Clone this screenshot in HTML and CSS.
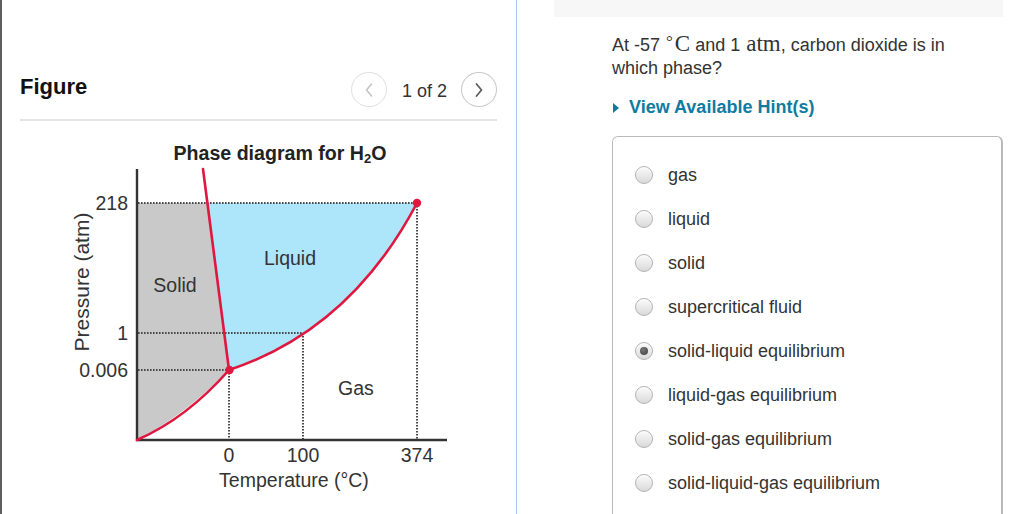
FILE: index.html
```html
<!DOCTYPE html>
<html>
<head>
<meta charset="utf-8">
<link rel="stylesheet" href="styles.css">
</head>
<body>
<div class="page">
  <section class="figure-panel">
    <header class="fig-head">
      <h2 class="fig-title">Figure</h2>
      <div class="pager">
        <button class="nav nav-prev" aria-label="Previous">
          <svg width="12" height="18" viewBox="0 0 12 18"><polyline points="8.5,3 3.5,9 8.5,15" fill="none" stroke="#c4c4c4" stroke-width="1.6" stroke-linecap="round" stroke-linejoin="round"/></svg>
        </button>
        <span class="pager-count">1 of 2</span>
        <button class="nav nav-next" aria-label="Next">
          <svg width="12" height="18" viewBox="0 0 12 18"><polyline points="3.5,3 8.5,9 3.5,15" fill="none" stroke="#5f5f5f" stroke-width="1.8" stroke-linecap="round" stroke-linejoin="round"/></svg>
        </button>
      </div>
    </header>
    <svg class="diagram" width="514" height="393" viewBox="2 121 514 393">
      <path d="M137,203 L207.4,203 L229,370 Q185,415 137,440 Z" fill="#c9c9c9"/>
      <path d="M207.4,203 L417,203 Q350,330 229,370 Z" fill="#ade6fb"/>
      <g stroke="#4a4a4a" stroke-width="2" stroke-dasharray="1.6 1.4" fill="none">
        <line x1="138" y1="203" x2="417" y2="203"/>
        <line x1="417" y1="203" x2="417" y2="440"/>
        <line x1="138" y1="333" x2="303" y2="333"/>
        <line x1="303" y1="333" x2="303" y2="440"/>
        <line x1="138" y1="370" x2="229" y2="370"/>
        <line x1="229" y1="370" x2="229" y2="440"/>
      </g>
      <path d="M137,169 L137,440 L447,440" fill="none" stroke="#333" stroke-width="2.4"/>
      <g stroke="#e0173f" stroke-width="2.6" fill="none" stroke-linecap="round">
        <path d="M137,440 Q187,418 229,370"/>
        <path d="M203,169 L229,370"/>
        <path d="M229,370 Q350,330 417,203"/>
      </g>
      <circle cx="229.5" cy="370" r="4.2" fill="#e0173f"/>
      <circle cx="417" cy="203" r="4.2" fill="#e0173f"/>
      <g class="dtext">
        <text x="280" y="160" text-anchor="middle" class="dtitle">Phase diagram for H<tspan class="sub" dy="3">2</tspan><tspan dy="-3">O</tspan></text>
        <text x="128" y="210" text-anchor="end">218</text>
        <text x="128" y="340" text-anchor="end">1</text>
        <text x="128" y="377" text-anchor="end">0.006</text>
        <text transform="translate(89,282) rotate(-90)" text-anchor="middle" class="ylabel">Pressure (atm)</text>
        <text x="175" y="292" text-anchor="middle">Solid</text>
        <text x="290" y="265" text-anchor="middle">Liquid</text>
        <text x="356" y="395" text-anchor="middle">Gas</text>
        <text x="229" y="462" text-anchor="middle">0</text>
        <text x="303" y="462" text-anchor="middle">100</text>
        <text x="417" y="462" text-anchor="middle">374</text>
        <text x="294" y="487" text-anchor="middle">Temperature (°C)</text>
      </g>
    </svg>
  </section>
  <section class="question-panel">
    <div class="topbar"></div>
    <div class="qbody">
      <p class="question">At -57 <span class="math"><span class="deg">°</span>C</span> and 1 <span class="math">atm</span>, carbon dioxide is in which phase?</p>
      <a class="hint"><span class="hint-arrow"></span>View Available Hint(s)</a>
      <div class="answers">
        <label class="option"><span class="radio"></span><span class="opt-text">gas</span></label>
        <label class="option"><span class="radio"></span><span class="opt-text">liquid</span></label>
        <label class="option"><span class="radio"></span><span class="opt-text">solid</span></label>
        <label class="option"><span class="radio"></span><span class="opt-text">supercritical fluid</span></label>
        <label class="option"><span class="radio checked"></span><span class="opt-text">solid-liquid equilibrium</span></label>
        <label class="option"><span class="radio"></span><span class="opt-text">liquid-gas equilibrium</span></label>
        <label class="option"><span class="radio"></span><span class="opt-text">solid-gas equilibrium</span></label>
        <label class="option"><span class="radio"></span><span class="opt-text">solid-liquid-gas equilibrium</span></label>
      </div>
    </div>
  </section>
</div>
</body>
</html>
```
FILE: styles.css
```css
html, body {
  margin: 0;
  padding: 0;
  background: #fff;
  font-family: "Liberation Sans", Arial, sans-serif;
  color: #333;
  overflow: hidden;
}
.page {
  display: flex;
  width: 1024px;
  height: 514px;
}
.figure-panel {
  width: 514px;
  flex: none;
  border-left: 2px solid #5e5e5e;
  border-right: 1px solid #a9c3de;
  height: 514px;
}
.fig-head {
  display: flex;
  align-items: center;
  justify-content: space-between;
  margin: 0 19px 0 18px;
  padding: 72px 0 12px;
  border-bottom: 2px solid #e4e4e4;
}
.fig-title {
  margin: 0;
  font-size: 22px;
  font-weight: bold;
  color: #111;
  line-height: 26px;
  position: relative;
  top: -3px;
}
.pager {
  display: flex;
  align-items: center;
}
.nav {
  width: 36px;
  height: 35px;
  border-radius: 50%;
  background: #fff;
  padding: 0;
  display: flex;
  align-items: center;
  justify-content: center;
  cursor: pointer;
}
.nav-prev {
  border: 1px solid #e2e2e2;
}
.nav-next {
  border: 1.5px solid #c8c8c8;
}
.pager-count {
  font-size: 18px;
  color: #333;
  margin: 0 14px 0 15px;
  position: relative;
  top: 2px;
}
.diagram {
  display: block;
}
.dtext text {
  font-family: "Liberation Sans", Arial, sans-serif;
  font-size: 19.5px;
  fill: #333;
}
.dtext .dtitle {
  font-weight: bold;
  font-size: 19.6px;
  fill: #222;
}
.dtext .sub {
  font-size: 13px;
}
.dtext .ylabel {
  font-size: 21px;
}
.question-panel {
  flex: 1;
  height: 514px;
}
.topbar {
  margin-left: 37px;
  width: 449px;
  height: 17px;
  background: #f7f7f7;
}
.qbody {
  margin-left: 95px;
  width: 391px;
}
.question {
  margin: 15px 0 0;
  font-size: 18px;
  line-height: 23px;
  color: #333;
  width: 370px;
}
.math {
  font-family: "Liberation Serif", "DejaVu Serif", serif;
  font-size: 23px;
  line-height: 1;
  margin-left: 1px;
}
.deg {
  font-size: 17px;
  line-height: 1;
  vertical-align: 4px;
  margin-right: 2px;
}
.hint {
  display: flex;
  align-items: center;
  margin-top: 16px;
  font-size: 18px;
  line-height: 23px;
  font-weight: bold;
  color: #0f7ba1;
  cursor: pointer;
}
.hint-arrow {
  width: 0;
  height: 0;
  border-top: 5px solid transparent;
  border-bottom: 5px solid transparent;
  border-left: 6px solid #0f7ba1;
  margin: 1px 10px 0 1px;
}
.answers {
  margin-top: 17px;
  border: 1px solid #b9b9b9;
  border-right: 2px solid #b9b9b9;
  border-bottom: none;
  border-radius: 6px 6px 0 0;
  padding: 16px 0 0 22px;
  height: 400px;
}
.option {
  display: flex;
  align-items: center;
  height: 44px;
}
.radio {
  width: 16px;
  height: 16px;
  border: 1px solid #b3b3b3;
  border-radius: 50%;
  background: linear-gradient(#fbfbfb, #d9d9d9);
  box-shadow: inset 0 1px 1px rgba(255,255,255,0.8);
  flex: none;
  display: flex;
  align-items: center;
  justify-content: center;
}
.radio.checked::after {
  content: "";
  width: 8px;
  height: 8px;
  border-radius: 50%;
  background: radial-gradient(circle at 40% 35%, #777, #3e3e3e);
}
.opt-text {
  margin-left: 15px;
  font-size: 18px;
  color: #333;
}
```
